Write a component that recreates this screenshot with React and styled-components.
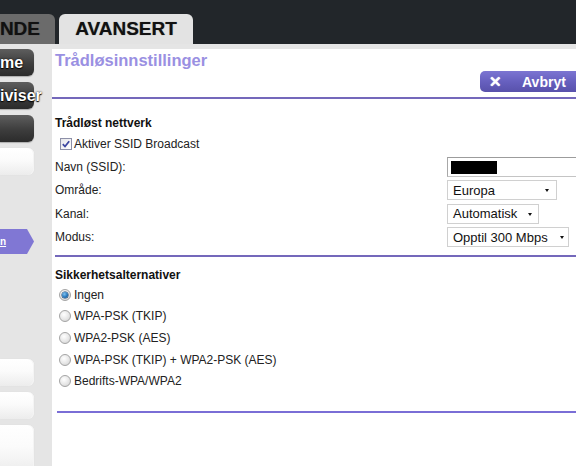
import React from 'react';
import styled, { createGlobalStyle } from 'styled-components';

const GlobalStyle = createGlobalStyle`
  html, body {
    margin: 0;
    padding: 0;
    overflow: hidden;
    background: #fff;
  }
  body {
    font-family: "Liberation Sans", Arial, sans-serif;
  }
`;

const Page = styled.div`
  width: 600px;
  height: 466px;
  display: flex;
  flex-direction: column;
`;

const TopBar = styled.div`
  height: 44px;
  flex-shrink: 0;
  background: #22262a;
  display: flex;
  align-items: flex-end;
`;

const Tab = styled.div`
  height: 30px;
  box-sizing: border-box;
  display: flex;
  align-items: center;
  justify-content: ${(p) => (p.$active ? 'center' : 'flex-end')};
  width: ${(p) => p.$width}px;
  margin-left: ${(p) => p.$offset || 0}px;
  padding-right: ${(p) => (p.$active ? 0 : 15)}px;
  white-space: nowrap;
  background: ${(p) => (p.$active ? '#e3e3e3' : '#6b6b6b')};
  border-radius: ${(p) => (p.$active ? '6px 6px 0 0' : '0 6px 0 0')};
  color: #111;
  font-weight: bold;
  font-size: 19px;
  line-height: 30px;
  text-shadow: 0 0 1px rgba(0, 0, 0, 0.45);
`;

const Body = styled.div`
  flex: 1;
  display: flex;
  background: #e5e5e5;
  padding-top: 5px;
  min-height: 0;
`;

const Sidebar = styled.div`
  width: 52px;
  flex-shrink: 0;
  display: flex;
  flex-direction: column;
  align-items: flex-start;
`;

const SideButton = styled.div`
  width: 34px;
  height: ${(p) => p.$height || 27}px;
  flex-shrink: 0;
  box-sizing: border-box;
  margin-top: ${(p) => p.$gap || 0}px;
  border-radius: 0 6px 6px 0;
  display: flex;
  align-items: center;
  white-space: nowrap;
  color: #fff;
  font-weight: bold;
  font-size: 16px;
  text-shadow: 0 0 2px #000, 0 1px 1px #000;
  background: ${(p) =>
    p.$light
      ? 'linear-gradient(#ffffff, #fbfbfb 45%, #ececec)'
      : 'linear-gradient(#5e5e5e, #3d3d3d 55%, #2b2b2b)'};
  box-shadow: ${(p) =>
    p.$light ? 'inset -1px 0 0 #f4f4f4, 0 0 1px #d6d6d6' : '0 1px 1px rgba(0,0,0,0.25)'};
`;

const SideArrow = styled.div`
  width: 34px;
  height: 25px;
  margin-top: 54px;
  flex-shrink: 0;
  background: #8077d4;
  clip-path: polygon(0 0, 27px 0, 34px 50%, 27px 100%, 0 100%);
  display: flex;
  align-items: center;
  color: #fff;
  font-size: 10px;
  font-weight: bold;
  text-decoration: underline;
`;

const Main = styled.div`
  flex: 1;
  background: #fff;
  padding-left: 3px;
  display: flex;
  flex-direction: column;
  overflow: hidden;
  color: #222;
`;

const Title = styled.div`
  margin-top: 1px;
  font-size: 16.5px;
  line-height: 20px;
  font-weight: bold;
  color: #9a90e2;
`;

const ButtonRow = styled.div`
  margin-top: 1px;
  display: flex;
  justify-content: flex-end;
  padding-right: 10px;
`;

const CancelButton = styled.div`
  width: 110px;
  height: 21px;
  box-sizing: border-box;
  border-radius: 5px;
  background: linear-gradient(#7c75d2, #6760bf 50%, #5851ab);
  color: #fff;
  display: flex;
  align-items: center;
  padding-left: 9px;
  font-weight: bold;
  font-size: 14px;
`;

const CloseMark = styled.span`
  font-size: 15px;
  font-weight: 900;
  width: 8px;
  margin-right: 25px;
  line-height: 1;
  text-shadow: 0 0 1px #fff;
`;

const Rule = styled.div`
  height: 2px;
  flex-shrink: 0;
  background: ${(p) => p.$color || '#7468bb'};
  margin-top: ${(p) => p.$top}px;
  margin-left: ${(p) => p.$indent || 0}px;
`;

const SectionTitle = styled.div`
  font-size: 12px;
  line-height: 16px;
  font-weight: bold;
  color: #111;
  margin-top: ${(p) => p.$top}px;
`;

const CheckRow = styled.label`
  display: flex;
  align-items: center;
  height: 16px;
  margin-top: 5px;
  padding-left: 5px;
  font-size: 12px;
`;

const CheckBox = styled.span`
  width: 12px;
  height: 12px;
  box-sizing: border-box;
  margin-right: 2px;
  border: 1px solid #8d90a8;
  background: linear-gradient(135deg, #e6e6ea, #ffffff);
  display: flex;
  align-items: center;
  justify-content: center;
`;

const FormGrid = styled.div`
  margin-top: 4.7px;
  display: grid;
  grid-template-columns: 392px auto;
  grid-auto-rows: 20px;
  row-gap: 3.5px;
  align-items: center;
  font-size: 12px;
`;

const TextBox = styled.div`
  width: 140px;
  height: 20px;
  box-sizing: border-box;
  border: 1px solid #c4c4c4;
  border-top-color: #9c9c9c;
  border-left-color: #a8a8a8;
  display: flex;
  align-items: center;
  padding-left: 3px;
`;

const Redacted = styled.span`
  width: 46px;
  height: 13px;
  background: #000;
  margin-top: 1px;
`;

const Select = styled.div`
  width: ${(p) => p.$width}px;
  height: 20px;
  box-sizing: border-box;
  border: 1px solid #d0d0d0;
  display: flex;
  align-items: center;
  justify-content: space-between;
  padding: 0 ${(p) => p.$pad || 6}px 0 5px;
  font-size: 13px;
  color: #111;
`;

const Caret = styled.span`
  width: 0;
  height: 0;
  border-left: 2.5px solid transparent;
  border-right: 2.5px solid transparent;
  border-top: 3px solid #111;
  margin-top: 1px;
`;

const RadioList = styled.div`
  margin-top: 4px;
  display: flex;
  flex-direction: column;
  gap: 5.7px;
`;

const RadioRow = styled.label`
  display: flex;
  align-items: center;
  height: 16px;
  padding-left: 4px;
  font-size: 12px;
`;

const Radio = styled.span`
  width: 12px;
  height: 12px;
  box-sizing: border-box;
  border-radius: 50%;
  margin-right: 3px;
  border: 1px solid #a4a4a4;
  background: radial-gradient(circle at 40% 35%, #ffffff, #e4e4e4 60%, #c9c9c9);
  display: flex;
  align-items: center;
  justify-content: center;

  &::after {
    content: '';
    display: ${(p) => (p.$checked ? 'block' : 'none')};
    width: 6px;
    height: 6px;
    border-radius: 50%;
    background: radial-gradient(circle at 40% 35%, #7fc3f0, #1f6fb6 60%, #154d86);
    box-shadow: 0 0 0 0.5px #0c3560;
  }
`;

const security = [
  { label: 'Ingen', checked: true },
  { label: 'WPA-PSK (TKIP)' },
  { label: 'WPA2-PSK (AES)' },
  { label: 'WPA-PSK (TKIP) + WPA2-PSK (AES)' },
  { label: 'Bedrifts-WPA/WPA2' },
];

const App = () => {
  return (
    <Page>
      <GlobalStyle />
      <TopBar>
        <Tab $width={55}>NDE</Tab>
        <Tab $active $width={134} $offset={4}>AVANSERT</Tab>
      </TopBar>
      <Body>
        <Sidebar>
          <SideButton>me</SideButton>
          <SideButton $gap={6}>iviser</SideButton>
          <SideButton $gap={6} />
          <SideButton $gap={6} $light />
          <SideArrow>n</SideArrow>
          <SideButton $gap={105} $light />
          <SideButton $gap={6} $light />
          <SideButton $gap={6} $light $height={48} />
        </Sidebar>
        <Main>
          <Title>Trådløsinnstillinger</Title>
          <ButtonRow>
            <CancelButton>
              <CloseMark>✕</CloseMark>
              Avbryt
            </CancelButton>
          </ButtonRow>
          <Rule $top={5} $indent={-3} />

          <SectionTitle $top={16}>Trådløst nettverk</SectionTitle>
          <CheckRow>
            <CheckBox>
              <svg width="8" height="8" viewBox="0 0 8 8">
                <path d="M0.8 4.2 L3 6.5 L7.2 1.2" fill="none" stroke="#3c46a0" strokeWidth="1.8" />
              </svg>
            </CheckBox>
            Aktiver SSID Broadcast
          </CheckRow>
          <FormGrid>
            <span>Navn (SSID):</span>
            <TextBox><Redacted /></TextBox>
            <span>Område:</span>
            <Select $width={110} $pad={7}>Europa<Caret /></Select>
            <span>Kanal:</span>
            <Select $width={92}>Automatisk<Caret /></Select>
            <span>Modus:</span>
            <Select $width={122} $pad={4}>Opptil 300 Mbps<Caret /></Select>
          </FormGrid>
          <Rule $top={8} />

          <SectionTitle $top={9.5}>Sikkerhetsalternativer</SectionTitle>
          <RadioList>
            {security.map((s) => (
              <RadioRow key={s.label}>
                <Radio $checked={s.checked} />
                {s.label}
              </RadioRow>
            ))}
          </RadioList>
          <Rule $top={21.2} $indent={2} $color="#7a6ed6" />
        </Main>
      </Body>
    </Page>
  );
};

export default App;
